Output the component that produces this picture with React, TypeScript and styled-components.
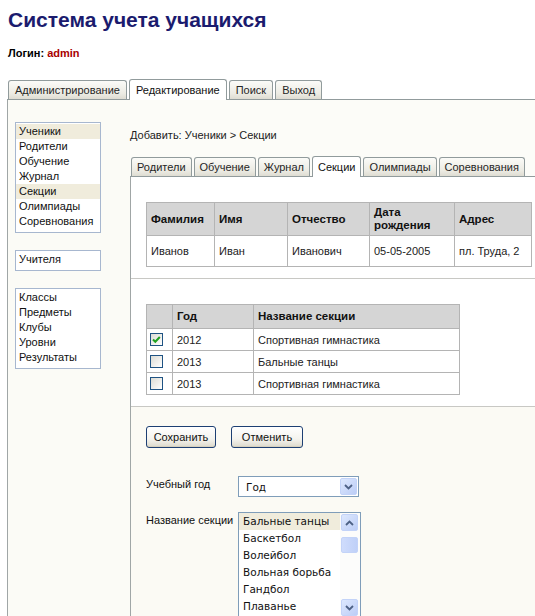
import React from "react";
import styled, { createGlobalStyle, css } from "styled-components";

const GlobalStyle = createGlobalStyle`
  html, body {
    margin: 0;
    padding: 0;
    background: #ffffff;
    overflow: hidden;
  }
  body {
    font-family: "Liberation Sans", Arial, sans-serif;
    font-size: 11px;
    color: #000;
  }
`;

const Page = styled.div`
  width: 640px;
  padding: 6px 0 0 7px;
`;

const Title = styled.h1`
  margin: 0 0 0 1px;
  font-family: "Liberation Sans", Arial, sans-serif;
  font-size: 21px;
  line-height: 27px;
  font-weight: bold;
  color: #1b1b6e;
`;

const Login = styled.div`
  margin: 13px 0 0 1px;
  font-weight: bold;
  font-size: 11px;
  line-height: 14px;
  span {
    color: #a80000;
  }
`;

const TabBar = styled.div<{ $top?: number }>`
  display: flex;
  align-items: flex-end;
  gap: 2px;
  padding-left: 1px;
  height: 20px;
  border-bottom: 1px solid #919b9c;
  margin-top: ${(p) => p.$top ?? 0}px;
`;

const Tab = styled.div<{ $active?: boolean }>`
  box-sizing: border-box;
  height: 19px;
  padding: 0 6px;
  display: flex;
  align-items: center;
  font-size: 11px;
  color: #262626;
  border: 1px solid #919b9c;
  border-bottom: none;
  border-radius: 3px 3px 0 0;
  background: linear-gradient(#fbfbf8, #ecebe3 70%, #dedcd2);
  ${(p) =>
    p.$active &&
    css`
      height: 21px;
      margin-bottom: -1px;
      background: #ffffff;
      color: #111;
    `}
`;

const SubTab = styled(Tab)`
  padding: 0 5px;
`;

const MainPanel = styled.div`
  display: flex;
  border-left: 1px solid #a0a6a6;
  background: #fcfcf8;
  min-height: 520px;
`;

const Sidebar = styled.div`
  width: 122px;
  box-sizing: border-box;
  padding: 22px 0 0 7px;
  display: flex;
  flex-direction: column;
  gap: 17px;
  background: #fbfbf6;
`;

const MenuBox = styled.ul`
  list-style: none;
  margin: 0;
  width: 86px;
  box-sizing: border-box;
  padding: 1px 0 3px;
  border: 1px solid #a7b7cf;
  background: #ffffff;
`;

const MenuItem = styled.li<{ $selected?: boolean }>`
  height: 15px;
  line-height: 15px;
  padding-left: 3px;
  font-size: 11px;
  color: #111;
  background: ${(p) => (p.$selected ? "#f0ecdc" : "transparent")};
`;

const Content = styled.div`
  flex: 1;
  padding-top: 28px;
`;

const Breadcrumb = styled.div`
  font-size: 11px;
  line-height: 14px;
  color: #222;
  margin-bottom: 14px;
`;

const SubPanel = styled.div`
  border-left: 1px solid #a0a6a6;
`;

const Section = styled.div<{ $cream?: boolean }>`
  padding: 25px 0 11px 15px;
  border-bottom: 1px solid #c8c8c4;
  background: ${(p) => (p.$cream ? "#fbfaf4" : "#ffffff")};
  ${(p) =>
    p.$cream &&
    css`
      border-bottom: none;
      padding-top: 19px;
    `}
`;

const Grid = styled.table`
  border-collapse: collapse;
  background: #ffffff;
  th,
  td {
    border: 1px solid #b4b4b4;
    text-align: left;
    padding: 0 4px;
    font-size: 11px;
  }
  th {
    background: #d5d5d5;
    font-weight: bold;
    font-size: 11.5px;
    color: #111;
    line-height: 13px;
  }
  td {
    color: #222;
  }
`;

const PersonHead = styled.tr`
  height: 33px;
`;

const PersonRow = styled.tr`
  height: 31px;
`;

const SecHead = styled.tr`
  height: 24px;
`;

const SecRow = styled.tr`
  height: 22px;
`;

const CheckCell = styled.td`
  && {
    padding: 0 0 0 3px;
  }
`;

const Box = styled.span`
  display: block;
  width: 13px;
  height: 13px;
  box-sizing: border-box;
  border: 1px solid #1f5383;
  background: linear-gradient(135deg, #dcdcd5, #ffffff);
  svg {
    display: block;
  }
`;

const Buttons = styled.div`
  display: flex;
  gap: 15px;
`;

const Button = styled.button<{ $w: number }>`
  width: ${(p) => p.$w}px;
  height: 22px;
  padding: 0;
  font-family: "Liberation Sans", Arial, sans-serif;
  font-size: 11px;
  color: #111;
  border: 1px solid #1d3f73;
  border-radius: 3px;
  background: linear-gradient(#ffffff, #f4f3ee 60%, #dcd9cc);
  box-shadow: inset 0 -1px 0 #d6d0bd;
`;

const FormRow = styled.div<{ $top: number }>`
  display: flex;
  margin-top: ${(p) => p.$top}px;
`;

const Label = styled.div`
  width: 92px;
  font-size: 11px;
  color: #111;
  padding-top: 2px;
`;

const Select = styled.div`
  width: 121px;
  height: 21px;
  box-sizing: border-box;
  border: 1px solid #7f9db9;
  background: #fff;
  display: flex;
  align-items: center;
  justify-content: space-between;
  padding: 0 1px 0 7px;
  font-family: "DejaVu Sans", Verdana, sans-serif;
  font-size: 10.5px;
  color: #111;
`;

const ListBox = styled.div`
  width: 123px;
  height: 106px;
  box-sizing: border-box;
  border: 1px solid #7f9db9;
  background: #fff;
  display: flex;
`;

const ListItems = styled.div`
  flex: 1;
`;

const ListItem = styled.div<{ $selected?: boolean }>`
  height: 17px;
  line-height: 17px;
  padding-left: 4px;
  font-family: "DejaVu Sans", Verdana, sans-serif;
  font-size: 10.5px;
  color: #111;
  background: ${(p) => (p.$selected ? "#f0ecdc" : "transparent")};
`;

const ScrollBar = styled.div`
  width: 18px;
  background: #fcfcfb;
  display: flex;
  flex-direction: column;
  justify-content: space-between;
  padding: 1px;
  position: relative;
`;

const ArrowBtn = styled.div`
  width: 17px;
  height: 17px;
  box-sizing: border-box;
  border: 1px solid #c3d3f8;
  border-radius: 2px;
  background: linear-gradient(135deg, #dde8fe, #bccdf6);
  display: flex;
  align-items: center;
  justify-content: center;
`;

const Thumb = styled.div`
  position: absolute;
  left: 1px;
  top: 24px;
  width: 17px;
  height: 16px;
  box-sizing: border-box;
  border: 1px solid #c3d3f8;
  border-radius: 2px;
  background: linear-gradient(90deg, #cfdcfc, #bfd0f8);
`;

const Chevron = ({ up }: { up?: boolean }) => (
  <svg width="9" height="6" viewBox="0 0 9 6">
    <path
      d={up ? "M1 5 L4.5 1.5 L8 5" : "M1 1 L4.5 4.5 L8 1"}
      fill="none"
      stroke="#4d6185"
      strokeWidth="1.8"
    />
  </svg>
);

const CheckBox = ({ checked }: { checked?: boolean }) => (
  <Box>
    {checked && (
      <svg width="11" height="11" viewBox="0 0 11 11">
        <path d="M2 5.5 L4.3 7.8 L8.8 3" fill="none" stroke="#21a121" strokeWidth="2" />
      </svg>
    )}
  </Box>
);

const mainTabs = ["Администрирование", "Редактирование", "Поиск", "Выход"];
const subTabs = ["Родители", "Обучение", "Журнал", "Секции", "Олимпиады", "Соревнования"];
const menu1 = ["Ученики", "Родители", "Обучение", "Журнал", "Секции", "Олимпиады", "Соревнования"];
const menu3 = ["Классы", "Предметы", "Клубы", "Уровни", "Результаты"];
const sections = [
  { year: "2012", name: "Спортивная гимнастика", checked: true },
  { year: "2013", name: "Бальные танцы", checked: false },
  { year: "2013", name: "Спортивная гимнастика", checked: false },
];
const options = ["Бальные танцы", "Баскетбол", "Волейбол", "Вольная борьба", "Гандбол", "Плаванье"];

export default function App() {
  return (
    <>
      <GlobalStyle />
      <Page>
        <Title>Система учета учащихся</Title>
        <Login>
          Логин: <span>admin</span>
        </Login>
        <TabBar $top={19}>
          {mainTabs.map((t) => (
            <Tab key={t} $active={t === "Редактирование"}>
              {t}
            </Tab>
          ))}
        </TabBar>
        <MainPanel>
          <Sidebar>
            <MenuBox>
              {menu1.map((m) => (
                <MenuItem key={m} $selected={m === "Ученики" || m === "Секции"}>
                  {m}
                </MenuItem>
              ))}
            </MenuBox>
            <MenuBox>
              <MenuItem>Учителя</MenuItem>
            </MenuBox>
            <MenuBox>
              {menu3.map((m) => (
                <MenuItem key={m}>{m}</MenuItem>
              ))}
            </MenuBox>
          </Sidebar>
          <Content>
            <Breadcrumb>Добавить: Ученики &gt; Секции</Breadcrumb>
            <TabBar>
              {subTabs.map((t) => (
                <SubTab key={t} $active={t === "Секции"}>
                  {t}
                </SubTab>
              ))}
            </TabBar>
            <SubPanel>
              <Section>
                <Grid>
                  <colgroup>
                    <col style={{ width: 68 }} />
                    <col style={{ width: 73 }} />
                    <col style={{ width: 82 }} />
                    <col style={{ width: 85 }} />
                    <col style={{ width: 77 }} />
                  </colgroup>
                  <thead>
                    <PersonHead>
                      <th>Фамилия</th>
                      <th>Имя</th>
                      <th>Отчество</th>
                      <th>
                        Дата
                        <br />
                        рождения
                      </th>
                      <th>Адрес</th>
                    </PersonHead>
                  </thead>
                  <tbody>
                    <PersonRow>
                      <td>Иванов</td>
                      <td>Иван</td>
                      <td>Иванович</td>
                      <td>05-05-2005</td>
                      <td>пл. Труда, 2</td>
                    </PersonRow>
                  </tbody>
                </Grid>
              </Section>
              <Section>
                <Grid>
                  <colgroup>
                    <col style={{ width: 26 }} />
                    <col style={{ width: 81 }} />
                    <col style={{ width: 206 }} />
                  </colgroup>
                  <thead>
                    <SecHead>
                      <th></th>
                      <th>Год</th>
                      <th>Название секции</th>
                    </SecHead>
                  </thead>
                  <tbody>
                    {sections.map((s, i) => (
                      <SecRow key={i}>
                        <CheckCell>
                          <CheckBox checked={s.checked} />
                        </CheckCell>
                        <td>{s.year}</td>
                        <td>{s.name}</td>
                      </SecRow>
                    ))}
                  </tbody>
                </Grid>
              </Section>
              <Section $cream>
                <Buttons>
                  <Button $w={70}>Сохранить</Button>
                  <Button $w={72}>Отменить</Button>
                </Buttons>
                <FormRow $top={28}>
                  <Label>Учебный год</Label>
                  <Select>
                    <span>Год</span>
                    <ArrowBtn>
                      <Chevron />
                    </ArrowBtn>
                  </Select>
                </FormRow>
                <FormRow $top={15}>
                  <Label>Название секции</Label>
                  <ListBox>
                    <ListItems>
                      {options.map((o, i) => (
                        <ListItem key={o} $selected={i === 0}>
                          {o}
                        </ListItem>
                      ))}
                    </ListItems>
                    <ScrollBar>
                      <ArrowBtn>
                        <Chevron up />
                      </ArrowBtn>
                      <Thumb />
                      <ArrowBtn>
                        <Chevron />
                      </ArrowBtn>
                    </ScrollBar>
                  </ListBox>
                </FormRow>
              </Section>
            </SubPanel>
          </Content>
        </MainPanel>
      </Page>
    </>
  );
}
